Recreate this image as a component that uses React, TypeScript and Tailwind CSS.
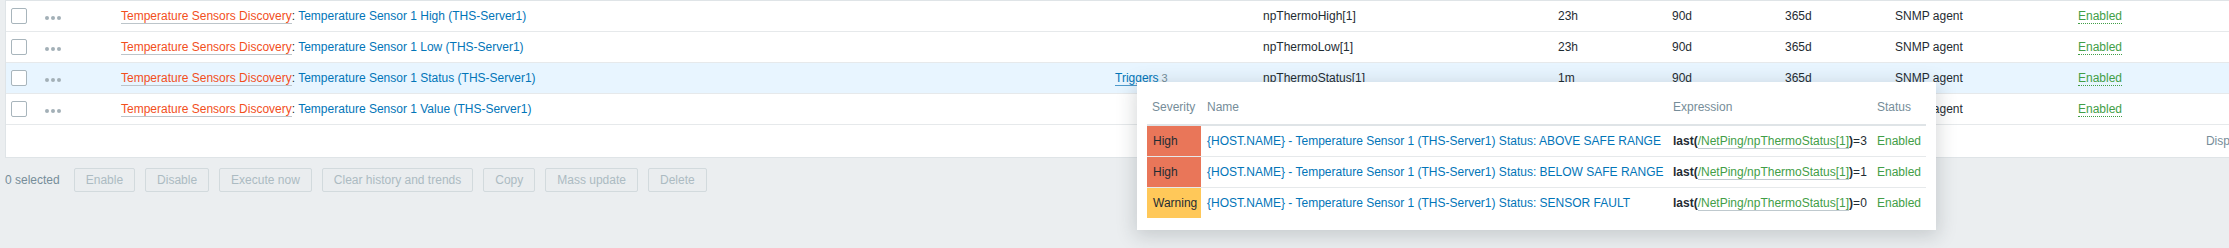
import React from "react";

type Item = {
  name: string;
  key: string;
  interval: string;
  triggers?: number;
};

const items: Item[] = [
  { name: "Temperature Sensor 1 High (THS-Server1)", key: "npThermoHigh[1]", interval: "23h" },
  { name: "Temperature Sensor 1 Low (THS-Server1)", key: "npThermoLow[1]", interval: "23h" },
  { name: "Temperature Sensor 1 Status (THS-Server1)", key: "npThermoStatus[1]", interval: "1m", triggers: 3 },
  { name: "Temperature Sensor 1 Value (THS-Server1)", key: "npThermoValue[1]", interval: "1m" },
];

const triggers = [
  { severity: "High", name: "ABOVE SAFE RANGE", value: "3" },
  { severity: "High", name: "BELOW SAFE RANGE", value: "1" },
  { severity: "Warning", name: "SENSOR FAULT", value: "0" },
];

const buttons = ["Enable", "Disable", "Execute now", "Clear history and trends", "Copy", "Mass update", "Delete"];

function Dots() {
  return (
    <div className="flex gap-[2px] mt-[3px]">
      <span className="w-[4px] h-[4px] rounded-full bg-[#a3b0b7]" />
      <span className="w-[4px] h-[4px] rounded-full bg-[#a3b0b7]" />
      <span className="w-[4px] h-[4px] rounded-full bg-[#a3b0b7]" />
    </div>
  );
}

function ItemRow({ item, active }: { item: Item; active: boolean }) {
  return (
    <div
      className={
        "grid grid-cols-[34px_76px_994px_148px_295px_114px_113px_110px_183px_1fr] h-[31px] items-center border-b border-[#e6e9eb] " +
        (active ? "bg-[#e8f5ff]" : "bg-white")
      }
    >
      <div className="pl-[5px]">
        <div className="w-[16px] h-[16px] rounded-[2px] border border-[#a8b5bc] bg-white" />
      </div>
      <div className="pl-[5px]">
        <Dots />
      </div>
      <div className="pl-[5px] whitespace-nowrap">
        <span className="text-[#f24f1d] border-b border-[#bcc5ca]">Temperature Sensors Discovery</span>
        <span>: </span>
        <span className="text-[#0275b8]">{item.name}</span>
      </div>
      <div className="pl-[5px] whitespace-nowrap">
        {item.triggers ? (
          <>
            <span className="text-[#0275b8] border-b border-[#4f9acb]">Triggers</span>
            <span className="text-[#768d99] text-[11px] ml-[3px]">{item.triggers}</span>
          </>
        ) : null}
      </div>
      <div className="pl-[5px]">{item.key}</div>
      <div className="pl-[5px]">{item.interval}</div>
      <div className="pl-[5px]">90d</div>
      <div className="pl-[5px]">365d</div>
      <div className="pl-[5px]">SNMP agent</div>
      <div className="pl-[5px]">
        <span className="text-[#429e47] border-b border-dotted border-[#429e47]">Enabled</span>
      </div>
    </div>
  );
}

function TriggerHint() {
  return (
    <div className="absolute left-[1137px] top-[82px] w-[799px] h-[148px] bg-white p-[10px] shadow-[0_4px_18px_2px_rgba(31,44,51,0.18)]">
      <div className="grid grid-cols-[54px_466px_204px_55px] h-[34px] items-end pb-[8px] border-b-2 border-[#dfe4e7] text-[#768d99]">
        <div className="pl-[5px]">Severity</div>
        <div className="pl-[6px]">Name</div>
        <div className="pl-[6px]">Expression</div>
        <div className="pl-[6px]">Status</div>
      </div>
      {triggers.map((t, i) => (
        <div
          key={i}
          className={
            "grid grid-cols-[54px_466px_204px_55px] items-center " +
            (i < triggers.length - 1 ? "h-[31px] border-b border-[#e6e9eb]" : "h-[30px]")
          }
        >
          <div
            className={
              "h-full flex items-center pl-[6px] text-[#1f2c33] " +
              (t.severity === "High" ? "bg-[#e97659]" : "bg-[#ffc859]")
            }
          >
            {t.severity}
          </div>
          <div className="pl-[6px] text-[#0275b8] whitespace-nowrap">
            {"{HOST.NAME} - Temperature Sensor 1 (THS-Server1) Status: " + t.name}
          </div>
          <div className="pl-[6px] whitespace-nowrap">
            <span className="font-bold">last(</span>
            <span className="text-[#429e47] border-b border-[#bfc9ce]">/NetPing/npThermoStatus[1]</span>
            <span className="font-bold">)</span>
            <span>={t.value}</span>
          </div>
          <div className="pl-[6px] text-[#429e47]">Enabled</div>
        </div>
      ))}
    </div>
  );
}

export default function App() {
  return (
    <div className="relative w-[2229px] h-[248px] overflow-hidden bg-[#ebeef0] font-['Liberation_Sans',Arial,sans-serif] text-[12px] text-[#1f2c33]">
      <div className="ml-[5px] w-[2329px] bg-white border border-[#dfe4e7]">
        {items.map((item, i) => (
          <ItemRow key={i} item={item} active={i === 2} />
        ))}
        <div className="h-[32px] flex items-center justify-end pr-[5px] text-[#768d99]">
          Displaying 4 of 4 found
        </div>
      </div>
      <div className="flex items-center h-[24px] mt-[10px] ml-[5px] gap-[10px]">
        <span className="text-[#768d99] mr-[4px]">0 selected</span>
        {buttons.map((b) => (
          <button
            key={b}
            disabled
            className="h-[24px] px-[11px] rounded-[2px] border border-[#d2dadd] bg-[#eaedef] text-[#acbbc2] leading-none"
          >
            {b}
          </button>
        ))}
      </div>
      <TriggerHint />
    </div>
  );
}
